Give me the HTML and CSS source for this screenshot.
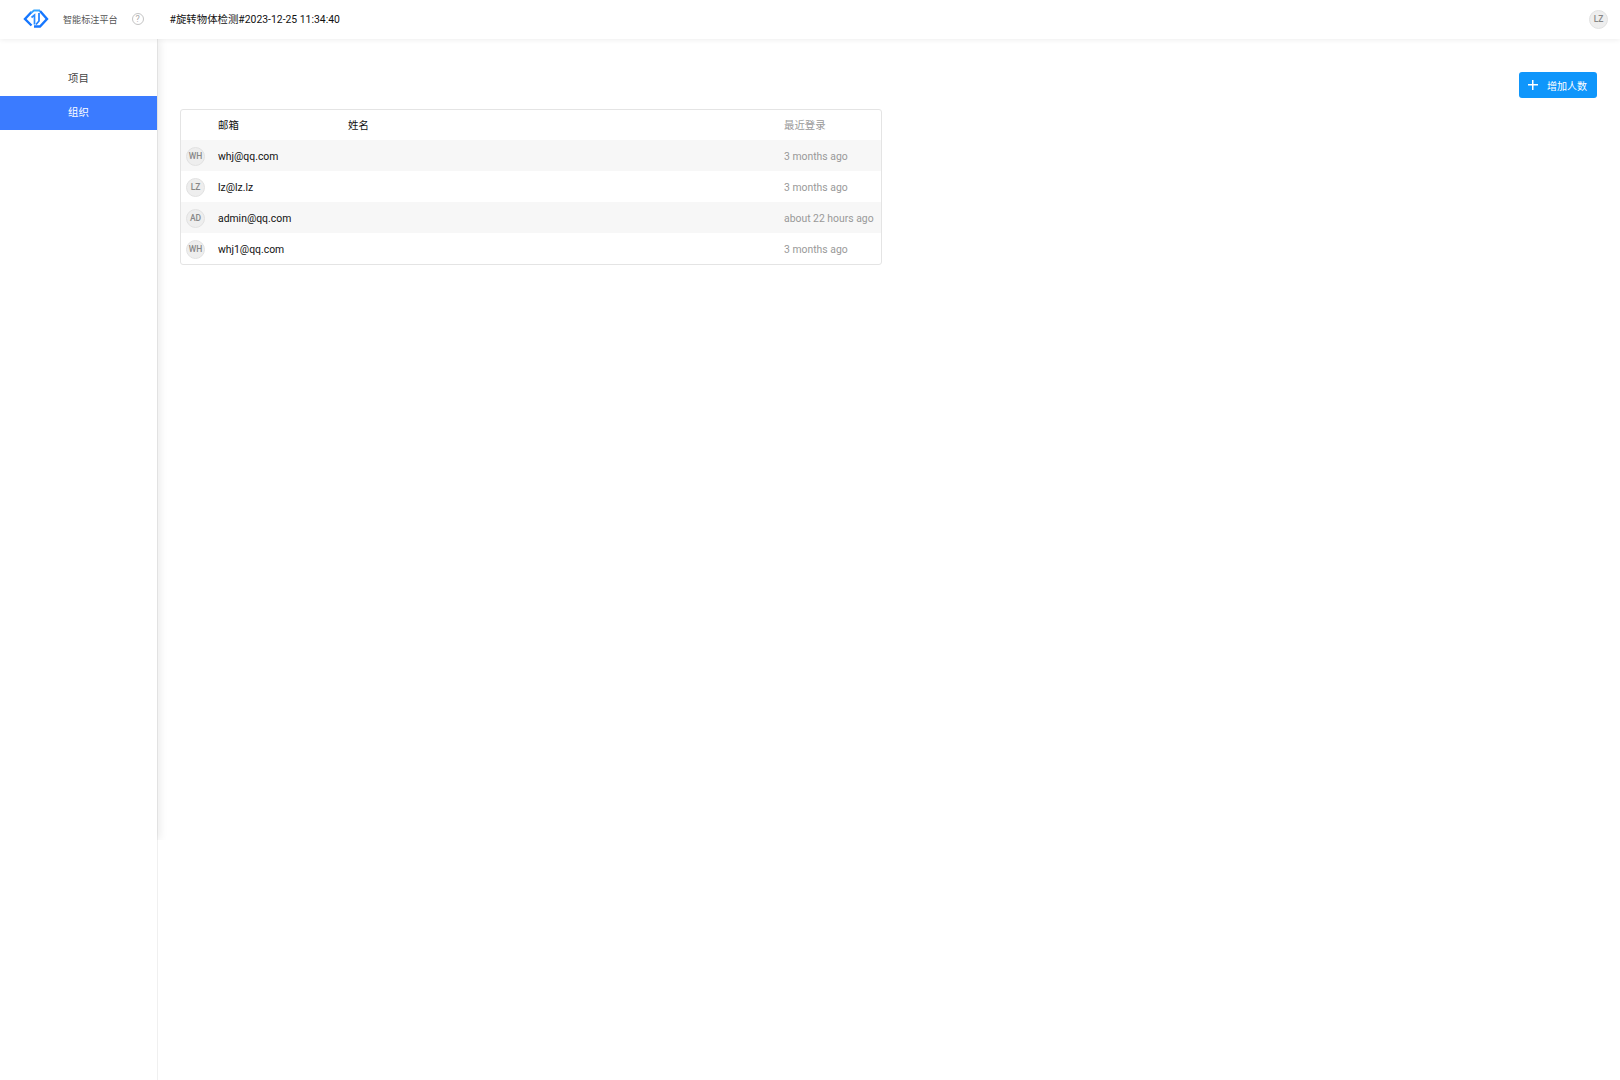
FILE: index.html
```html
<!DOCTYPE html>
<html lang="zh">
<head>
<meta charset="utf-8">
<title>组织</title>
<link rel="stylesheet" href="styles.css">
</head>
<body>
<header class="topbar">
  <svg class="logo" viewBox="0 0 26 20" width="26" height="20" fill="none">
    <path d="M8.500 3 2 10l6.500 6.500" stroke="#1677ff" stroke-width="2.400"/>
    <path d="M8 4 11 1.500H17" stroke="#35a5ff" stroke-width="1.800"/>
    <path d="M17 2 24 10l-7 7.500H11" stroke="#1677ff" stroke-width="2.400"/>
    <path d="M8.500 8.500 11.500 6V15.500" stroke="#2b8cff" stroke-width="1.700"/>
    <path d="M16 4V12L13 15.500" stroke="#1e80ff" stroke-width="1.700"/>
  </svg>
  <span class="brand">智能标注平台</span>
  <span class="help">?</span>
  <span class="title">#旋转物体检测#2023-12-25 11:34:40</span>
  <span class="avatar user">LZ</span>
</header>
<div class="body">
  <aside class="side">
    <nav class="side-panel">
      <a class="nav-item">项目</a>
      <a class="nav-item active">组织</a>
    </nav>
  </aside>
  <main class="content">
    <div class="toolbar">
      <button class="add"><span class="plus"></span><span>增加人数</span></button>
    </div>
    <div class="table">
      <div class="row head">
        <span class="c-av"></span><span class="c-mail">邮箱</span><span class="c-name">姓名</span><span class="c-time">最近登录</span>
      </div>
      <div class="row odd">
        <span class="c-av"><span class="avatar">WH</span></span><span class="c-mail">whj@qq.com</span><span class="c-name"></span><span class="c-time">3 months ago</span>
      </div>
      <div class="row">
        <span class="c-av"><span class="avatar">LZ</span></span><span class="c-mail">lz@lz.lz</span><span class="c-name"></span><span class="c-time">3 months ago</span>
      </div>
      <div class="row odd">
        <span class="c-av"><span class="avatar">AD</span></span><span class="c-mail">admin@qq.com</span><span class="c-name"></span><span class="c-time">about 22 hours ago</span>
      </div>
      <div class="row">
        <span class="c-av"><span class="avatar">WH</span></span><span class="c-mail">whj1@qq.com</span><span class="c-name"></span><span class="c-time">3 months ago</span>
      </div>
    </div>
  </main>
</div>
</body>
</html>
```
FILE: styles.css
```css
* { box-sizing: border-box; }
html, body { margin: 0; height: 100%; }
body {
  height: 1080px;
  overflow: hidden;
  background: #fff;
  color: #111;
  font-family: Roboto, "Noto Sans CJK SC", sans-serif;
  font-size: 10.400px;
  display: flex;
  flex-direction: column;
}
.topbar {
  height: 39px;
  flex: none;
  display: flex;
  align-items: center;
  padding: 0 12px 1px 23px;
  background: #fff;
  box-shadow: 0 1px 5px rgba(0,0,0,.07);
  position: relative;
  z-index: 2;
}
.logo { flex: none; }
.brand { margin-left: 14px; color: #555; font-size: 9.100px; }
.help {
  margin-left: 14px;
  width: 12px; height: 12px;
  border: 1px solid #c4c4c4;
  border-radius: 50%;
  color: #aaa;
  font-size: 9px;
  line-height: 10px;
  text-align: center;
}
.title { margin-left: 26px; padding-bottom: 2px; color: #111; }
.avatar {
  width: 19px; height: 19px;
  border-radius: 50%;
  background: #eee;
  border: 1px solid #e2e2e2;
  color: #888;
  font-size: 8.500px;
  font-weight: 500;
  display: flex;
  align-items: center;
  justify-content: center;
}
.user { margin-left: auto; }
.body { flex: 1; display: flex; min-height: 0; }
.side { width: 158px; flex: none; border-right: 1px solid #f0f0f0; }
.side-panel {
  height: 801px;
  padding-top: 23px;
  box-shadow: 3px 0 8px rgba(0,0,0,.08);
  clip-path: inset(0 -12px 0 0);
  background: #fff;
}
.nav-item {
  display: block;
  height: 34px;
  line-height: 34px;
  text-align: center;
  color: #444;
}
.nav-item.active { background: #3b7bff; color: #fff; }
.content { flex: 1; padding: 33px 23px 0 22px; }
.toolbar { display: flex; justify-content: flex-end; height: 37px; }
.add {
  width: 78px; height: 26px;
  border: 0;
  border-radius: 3px;
  background: #0f96fb;
  color: #fff;
  font: inherit;
  font-size: 10px;
  display: flex;
  align-items: center;
  padding: 0 0 0 9px;
  gap: 9px;
}
.plus {
  width: 10px; height: 10px;
  background:
    linear-gradient(#fff,#fff) center/10px 1.500px no-repeat,
    linear-gradient(#fff,#fff) center/1.500px 10px no-repeat;
}
.table {
  width: 702px;
  border: 1px solid #e4e4e4;
  border-radius: 3px;
  overflow: hidden;
}
.row { display: flex; align-items: center; height: 31px; padding-top: 1px; }
.row.head { height: 30px; padding: 0 0 1px; }
.row.odd { background: #f7f7f7; }
.c-av { width: 37px; padding-left: 5px; flex: none; }
.c-mail { width: 130px; flex: none; }
.c-name { flex: 1; }
.c-time { width: 97px; flex: none; color: #999; }
```
